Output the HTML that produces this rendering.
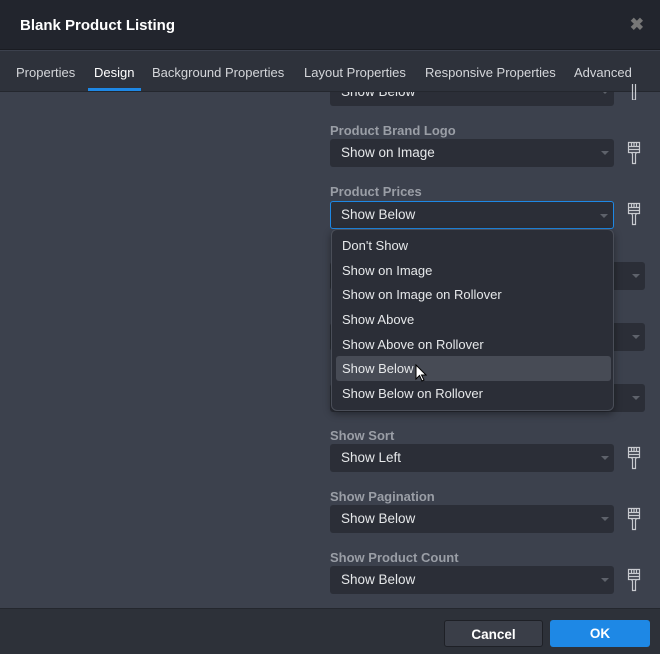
<!DOCTYPE html>
<html><head><style>
*{box-sizing:border-box;margin:0;padding:0}
body{width:660px;height:654px;background:#3c414d;font-family:"Liberation Sans",sans-serif;position:relative;overflow:hidden;font-size:13px}
.hdr{position:absolute;left:0;top:0;width:660px;height:50px;background:#22252d;border-bottom:1px solid #1a1c22}
.hdr h1{position:absolute;left:20px;top:17px;font-size:15px;color:#fff;font-weight:bold}
.x{position:absolute;right:16px;top:15px;color:#777;font-size:17px;font-weight:bold}
.tab{position:absolute;top:65px;color:#d4d6da;font-size:13px}
.ul{position:absolute;left:88px;top:88px;width:53px;height:3px;background:#1e88e5}
.lbl{position:absolute;left:330px;color:#9a9ea6;font-size:13px;font-weight:bold}
.sel{position:absolute;left:330px;width:284px;height:28px;background:#2b2e37;border-radius:3px;color:#e6e8ea;padding:6px 0 0 11px;font-size:13.5px}
.sel:after{content:"";position:absolute;right:5px;top:12px;border:4px solid transparent;border-top:4px solid #5e626b}
.brush{position:absolute;left:626px;width:16px;height:24px}
.dd{position:absolute;left:331px;top:229px;width:283px;height:182px;background:#2b2e37;border:1px solid #4a4e58;border-radius:6px;box-shadow:0 3px 8px rgba(0,0,0,.4)}
.it{position:absolute;left:10px;color:#e6e8ea;font-size:13px}
.hl{position:absolute;left:4px;top:126px;width:275px;height:25px;background:#474b55;border-radius:3px}
.ftr{position:absolute;left:0;top:608px;width:660px;height:46px;background:#2d3139;border-top:1px solid #24272e}
.btn{position:absolute;top:11px;height:27px;border-radius:3px;color:#fff;font-weight:bold;font-size:13.5px;text-align:center;padding-top:6px}
</style></head><body>
<div class="hdr"><h1>Blank Product Listing</h1><div class="x">✖</div></div>
<div class="sel" style="top:78px">Show Below</div>
<div style="position:absolute;left:0;top:51px;width:660px;height:41px;background:#2e323b;border-bottom:1px solid #24272e"></div>
<span class="tab" style="left:16px">Properties</span>
<span class="tab" style="left:94px;color:#fff">Design</span>
<span class="tab" style="left:152px">Background Properties</span>
<span class="tab" style="left:304px">Layout Properties</span>
<span class="tab" style="left:425px">Responsive Properties</span>
<span class="tab" style="left:574px">Advanced</span>
<div class="ul"></div>

<div class="lbl" style="top:123px">Product Brand Logo</div>
<div class="sel" style="top:139px">Show on Image</div>
<div class="lbl" style="top:184px">Product Prices</div>
<div class="sel" style="top:201px;border:1px solid #1e88e5;padding-top:5px;padding-left:10px">Show Below</div>
<div class="sel" style="top:262px;width:315px"></div>
<div class="sel" style="top:323px;width:315px"></div>
<div class="sel" style="top:384px;width:315px"></div>
<div class="lbl" style="top:428px">Show Sort</div>
<div class="sel" style="top:444px">Show Left</div>
<div class="lbl" style="top:489px">Show Pagination</div>
<div class="sel" style="top:505px">Show Below</div>
<div class="lbl" style="top:550px">Show Product Count</div>
<div class="sel" style="top:566px">Show Below</div>

<svg width="0" height="0" style="position:absolute"><defs><g id="b" fill="none" stroke="#c8cacf" stroke-width="1.2"><path d="M2.5 1.5h11v10h-11z M5.5 1.5v4 M8 1.5v4 M10.5 1.5v4 M2.5 5.5h11 M2.5 8.5h11"/><path d="M5.5 11.5l1 1.5v9.5h3V13l1-1.5"/></g></defs></svg>
<svg class="brush" style="top:141px"><use href="#b"/></svg>
<svg class="brush" style="top:202px"><use href="#b"/></svg>
<svg class="brush" style="top:446px"><use href="#b"/></svg>
<svg class="brush" style="top:507px"><use href="#b"/></svg>
<svg class="brush" style="top:568px"><use href="#b"/></svg>
<svg class="brush" style="top:84px;height:16px"><path d="M6.5 0v16h3V0" fill="none" stroke="#c8cacf" stroke-width="1.2"/></svg>

<div class="dd">
<div class="hl"></div>
<div class="it" style="top:8px">Don't Show</div>
<div class="it" style="top:33px">Show on Image</div>
<div class="it" style="top:57px">Show on Image on Rollover</div>
<div class="it" style="top:82px">Show Above</div>
<div class="it" style="top:107px">Show Above on Rollover</div>
<div class="it" style="top:131px">Show Below</div>
<div class="it" style="top:156px">Show Below on Rollover</div>
</div>
<svg style="position:absolute;left:415px;top:364px" width="12" height="18"><path d="M1 1v14l3.5-3.5 2.5 5.5 2-1-2.5-5H11z" fill="#fff" stroke="#000" stroke-width="1"/></svg>

<div class="ftr">
<div class="btn" style="left:444px;width:99px;background:#3a3e48;border:1px solid #1e2026">Cancel</div>
<div class="btn" style="left:550px;width:100px;background:#1e88e5">OK</div>
</div>
</body></html>
